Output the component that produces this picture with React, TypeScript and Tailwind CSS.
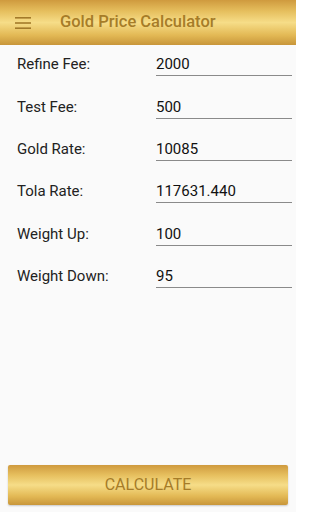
const fields = [
  { label: "Refine Fee:", value: "2000" },
  { label: "Test Fee:", value: "500" },
  { label: "Gold Rate:", value: "10085" },
  { label: "Tola Rate:", value: "117631.440" },
  { label: "Weight Up:", value: "100" },
  { label: "Weight Down:", value: "95" },
];

const gold =
  "bg-[linear-gradient(to_bottom,#cf9a3e_0%,#e6bf5e_25%,#f6dd88_50%,#e3b955_78%,#c8963a_100%)]";

export default function App() {
  return (
    <div className="flex h-[512px] w-[296px] flex-col bg-[#fafafa] font-['Roboto',sans-serif]">
      {/* Toolbar */}
      <header className={`flex h-[45px] shrink-0 items-center ${gold}`}>
        <svg width="16" height="12" viewBox="0 0 16 12" className="ml-[15px]">
          <rect x="0" y="0" width="16" height="1.6" fill="#a37a2a" />
          <rect x="0" y="5.2" width="16" height="1.6" fill="#a37a2a" />
          <rect x="0" y="10.4" width="16" height="1.6" fill="#a37a2a" />
        </svg>
        <h1 className="ml-[29px] text-[16.5px] font-medium text-[#a67c28]">Gold Price Calculator</h1>
      </header>

      {/* Form */}
      <div className="-mt-[1px] flex flex-col">
        {fields.map((f) => (
          <div key={f.label} className="flex h-[42.4px] items-center">
            <span className="w-[156px] shrink-0 pb-[2px] pl-[17px] text-[15px] leading-[20px] text-[#222]">
              {f.label}
            </span>
            <div className="mr-[4px] flex-1 border-b border-[#8a8a8a] pb-[1px] text-[15px] leading-[20px] text-[#111]">
              {f.value}
            </div>
          </div>
        ))}
      </div>

      <div className="flex-1" />

      {/* Button */}
      <div className="px-[8px] pb-[7px]">
        <button
          className={`flex h-[40px] w-full items-center justify-center rounded-[2px] text-[16px] text-[#a67c28] shadow-[0_1px_2px_rgba(0,0,0,0.2)] ${gold}`}
        >
          CALCULATE
        </button>
      </div>
    </div>
  );
}
